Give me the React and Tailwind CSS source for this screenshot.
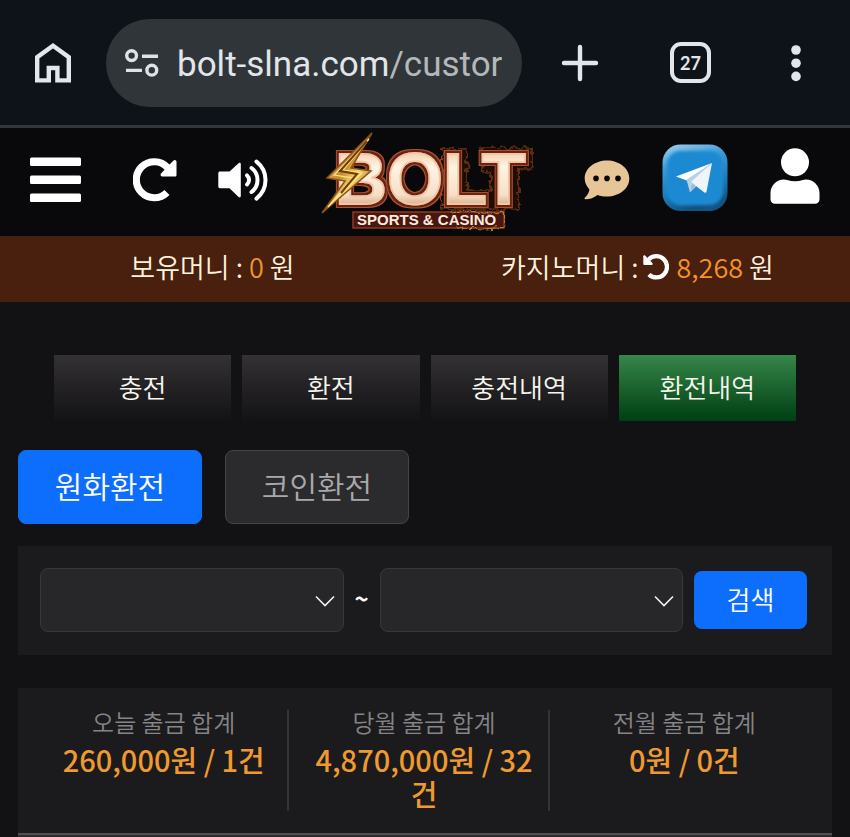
import React, { useState } from 'react';

const HomeIcon = () => (
  <svg viewBox="0 0 38 42" className="w-[38px] h-[42px]" fill="none" stroke="#e2e7ec" strokeWidth="4.4">
    <path d="M3.2 38.4V15.2L19 3.8l15.8 11.4v23.2H23.4V26h-8.6v12.4z" />
  </svg>
);

const SiteInfoIcon = () => (
  <svg viewBox="0 0 36 30" className="w-9 h-[30px] shrink-0" fill="none" stroke="#dfe3e7" strokeWidth="3.4">
    <circle cx="7.6" cy="7.6" r="4.9" />
    <path d="M18 8.2h16M2 22.4h16" />
    <circle cx="27.8" cy="22.2" r="4.9" />
  </svg>
);

const RotateIcon = ({ className }) => (
  <svg viewBox="0 0 44 44" className={className} fill="none">
    <path d="M34.500 9.500A18 18 0 1 0 34 34.500" stroke="#fff" strokeWidth="7.200" />
    <path d="M43.500 4v13c0 1-.6 1.600-1.600 1.600H29.500c-2 0-2.500-2-1.300-3.300L40.500 2.600c1.100-1.100 3-.4 3 1.400z" fill="#fff" />
  </svg>
);

const VolumeIcon = () => (
  <svg viewBox="0 0 52 42" className="w-[52px] h-[42px]">
    <path d="M2 12.500h9.500L20.600 4.200c1-.8 2.200-.4 2.200.9v32c0 1.300-1.200 1.700-2.200.9L11.500 29.300H2c-1 0-1.700-.7-1.700-1.700V14.200c0-1 .7-1.700 1.700-1.700z" fill="#fff" />
    <g fill="none" stroke="#fff" strokeWidth="4" strokeLinecap="round">
      <path d="M29 16.400a6 6 0 0 1 0 9" />
      <path d="M33.500 9a15 15 0 0 1 0 24" />
      <path d="M38.500 2.600a23.500 23.500 0 0 1 0 37" />
    </g>
  </svg>
);

const ChatIcon = () => (
  <svg viewBox="0 0 46 40" className="w-[46px] h-10">
    <path d="M23 .6c12.300 0 22.300 7.900 22.300 18s-10 18-22.300 18c-3.400 0-6.600-.6-9.500-1.700-3.300 2.700-7.600 4.300-12.100 4.300-.9 0-1.200-.8-.6-1.400 2.600-2.700 4.400-5.800 4.600-8.400C2.500 26.300.7 22.600.7 18.600c0-10.100 10-18 22.300-18z" fill="#e6c596" />
    <g fill="#0b0806">
      <circle cx="12" cy="18.400" r="2.800" />
      <circle cx="23" cy="18.400" r="2.800" />
      <circle cx="34" cy="18.400" r="2.800" />
    </g>
  </svg>
);

const TelegramIcon = () => (
  <svg viewBox="0 0 66 68" className="w-[66px] h-[68px]">
    <defs>
      <linearGradient id="tgRim" x1="0" y1="0" x2="0.3" y2="1">
        <stop offset="0" stopColor="#a5d2ee" />
        <stop offset="0.35" stopColor="#3c9bd9" />
        <stop offset="0.75" stopColor="#1c79b8" />
        <stop offset="1" stopColor="#125583" />
      </linearGradient>
      <filter id="tgSoft" x="-20%" y="-20%" width="140%" height="140%">
        <feGaussianBlur stdDeviation="1.8" />
      </filter>
    </defs>
    <rect x="0.500" y="0.500" width="65" height="66.500" rx="18" fill="url(#tgRim)" />
    <rect x="5" y="7" width="56" height="54" rx="14" fill="#1f8ad2" filter="url(#tgSoft)" />
    <path d="M50 19L14 32.500l11.500 4.300z" fill="#fff" />
    <path d="M50 19L24.500 35.500l3.400 12.800 2.600-9.500z" fill="#b9d1e5" />
    <path d="M50 19L30 37l-2.100 11.300 6.300-6 8.600 6.400c.8.400 1.500 0 1.700-.9z" fill="#eef5fb" />
    <path d="M27.900 48.300l6.300-6-4.200-3.800z" fill="#9cbdd8" />
  </svg>
);

const UserIcon = () => (
  <svg viewBox="0 0 50 56" className="w-[50px] h-14" fill="#fff">
    <circle cx="25" cy="14.300" r="14" />
    <path d="M14 31.500c1.200 0 2.200.2 3.200.5 5 1.600 10.600 1.600 15.600 0 1-.3 2-.5 3.200-.5 7.500 0 13.500 6 13.500 13.500v6.500c0 2.500-2 4.300-4.500 4.300H5c-2.500 0-4.500-1.800-4.500-4.300V45c0-7.500 6-13.500 13.500-13.500z" />
  </svg>
);

const Logo = () => (
  <svg viewBox="0 0 220 104" className="w-[220px] h-[104px]" role="img" aria-label="BOLT Sports & Casino">
    <defs>
      <linearGradient id="face" x1="0" y1="0" x2="0" y2="1">
        <stop offset="0.1" stopColor="#f0c4a0" />
        <stop offset="0.35" stopColor="#fff3e4" />
        <stop offset="0.7" stopColor="#f6dfc8" />
        <stop offset="0.9" stopColor="#c98e68" />
      </linearGradient>
      <linearGradient id="gold" x1="0" y1="0" x2="1" y2="1">
        <stop offset="0" stopColor="#fbe08a" />
        <stop offset="0.45" stopColor="#c8892b" />
        <stop offset="0.6" stopColor="#f7d269" />
        <stop offset="1" stopColor="#7d4510" />
      </linearGradient>
      <filter id="rim" x="-10%" y="-20%" width="120%" height="140%">
        <feMorphology in="SourceAlpha" operator="dilate" radius="3" result="outer" />
        <feFlood floodColor="#a8502f" />
        <feComposite in2="outer" operator="in" result="rimLight" />
        <feMorphology in="SourceAlpha" operator="dilate" radius="2" result="inner" />
        <feFlood floodColor="#6b2113" />
        <feComposite in2="inner" operator="in" result="rimDark" />
        <feMerge>
          <feMergeNode in="rimLight" />
          <feMergeNode in="rimDark" />
          <feMergeNode in="SourceGraphic" />
        </feMerge>
      </filter>
      <filter id="burn" x="-10%" y="-20%" width="120%" height="140%">
        <feTurbulence type="fractalNoise" baseFrequency="0.18" numOctaves="2" seed="4" />
        <feDisplacementMap in="SourceGraphic" scale="8" />
      </filter>
    </defs>
    <path
      d="M126 19h24v41h24V42h-9V18h50v21h-13v40h-78z"
      fill="#1c0a04"
      stroke="#8a4318"
      strokeWidth="1.200"
      filter="url(#burn)"
    />
    <text
      x="18"
      y="74"
      fontSize="72"
      className="font-['Liberation_Sans'] font-bold"
      fill="url(#face)"
      stroke="#f3c7a2"
      strokeWidth="1.800"
      filter="url(#rim)"
    >
      BOLT
    </text>
    <g transform="translate(3 0)">
      <path d="M52 3L7 48l18 3L2 83l49-42-20-3z" fill="url(#gold)" stroke="#8a5217" strokeWidth="1.500" />
      <path d="M49 9L14 45l19 3L8 77l34-34-19-3z" fill="none" stroke="#ffe48c" strokeWidth="1.200" />
      <path d="M47 11L20 41l17 3-16 19" fill="none" stroke="#6e3d0c" strokeWidth="2" />
    </g>
    <rect x="36" y="82" width="151" height="16" fill="#4a1710" stroke="#8c3a23" strokeWidth="1.500" />
    <path d="M134 82q14-3 26 0t26-1l2 16-20 2-28-1" fill="none" stroke="#e0a23b" strokeWidth="0.800" filter="url(#burn)" />
    <text x="40" y="95" fontSize="15" className="font-['Liberation_Sans'] font-bold" fill="#fdebdc">SPORTS &amp; CASINO</text>
  </svg>
);

const BrowserBar = () => (
  <div className="flex h-[125px] items-center bg-[#0e131a] pl-[34px] pr-12 text-[#e2e5ea]">
    <button type="button" aria-label="Home">
      <HomeIcon />
    </button>
    <div className="ml-[34px] flex h-[88px] min-w-0 flex-1 items-center rounded-full bg-[#2f3538] px-[18px]">
      <SiteInfoIcon />
      <p className="ml-[17px] overflow-hidden whitespace-nowrap pt-1 font-['Roboto',sans-serif] text-[35px] font-normal leading-[44px]">
        bolt-slna.com<span className="text-[#b3b8bc]">/custor</span>
      </p>
    </div>
    <button type="button" aria-label="New tab" className="ml-[39px]">
      <svg viewBox="0 0 38 38" className="size-[38px]" stroke="#e2e5ea" strokeWidth="4.400" strokeLinecap="round">
        <path d="M19 3v32M3 19h32" />
      </svg>
    </button>
    <button
      type="button"
      className="ml-[71px] flex size-[41px] items-center justify-center rounded-[11px] border-4 border-[#e2e5ea] font-['Lato',sans-serif] text-lg font-bold"
    >
      27
    </button>
    <button type="button" aria-label="More" className="ml-[79px]">
      <svg viewBox="0 0 12 38" className="h-[38px] w-3" fill="#e2e5ea">
        <circle cx="6" cy="6" r="4.800" />
        <circle cx="6" cy="19.200" r="4.800" />
        <circle cx="6" cy="32.400" r="4.800" />
      </svg>
    </button>
  </div>
);

const SiteHeader = () => (
  <header className="flex h-[111px] items-center justify-between border-t-[3px] border-[#33363c] bg-[#09080b] px-[30px] pb-1 text-white">
    <div className="flex items-center">
      <button type="button" aria-label="Menu">
        <svg viewBox="0 0 51 46" className="h-[46px] w-[51px]" fill="#fff">
          <rect y="0.500" width="51" height="8.500" rx="1.500" />
          <rect y="18.500" width="51" height="8.500" rx="1.500" />
          <rect y="36.500" width="51" height="8.500" rx="1.500" />
        </svg>
      </button>
      <button type="button" aria-label="Refresh" className="ml-[52px]">
        <RotateIcon className="size-11" />
      </button>
      <button type="button" aria-label="Sound" className="ml-[41px]">
        <VolumeIcon />
      </button>
    </div>
    <a href="#" className="mt-1">
      <Logo />
    </a>
    <div className="flex items-center">
      <button type="button" aria-label="Messages">
        <ChatIcon />
      </button>
      <a href="#" aria-label="Telegram" className="ml-8 mb-1">
        <TelegramIcon />
      </a>
      <button type="button" aria-label="Account" className="ml-[42px] mb-2">
        <UserIcon />
      </button>
    </div>
  </header>
);

const MoneyBar = () => (
  <div className="grid h-[66px] grid-cols-2 items-center bg-[#491f0e] pb-1 text-[27px] text-[#fff3dd]">
    <p className="text-center">
      보유머니 : <span className="text-[#f29427]">0</span> 원
    </p>
    <p className="flex items-center justify-center whitespace-pre">
      카지노머니 :
      <button type="button" aria-label="Reload" className="ml-1 mr-2">
        <RotateIcon className="size-[26px] -scale-x-100" />
      </button>
      <span className="text-[#f29427]">8,268</span> 원
    </p>
  </div>
);

const DateSelect = ({ label }) => (
  <div className="relative min-w-0 flex-1">
    <select
      aria-label={label}
      className="block h-16 w-full appearance-none rounded-lg border border-[#38373a] bg-[#272629] px-4"
    >
      <option value=""></option>
    </select>
    <svg
      viewBox="0 0 20 12"
      className="pointer-events-none absolute right-[9px] top-[27px] h-3 w-5"
      fill="none"
      stroke="#f1f1f1"
      strokeWidth="1.600"
    >
      <path d="M1 1.500l9 9 9-9" />
    </svg>
  </div>
);

const tabs = ['충전', '환전', '충전내역', '환전내역'];

const totals = [
  { label: '오늘 출금 합계', value: '260,000원 / 1건' },
  { label: '당월 출금 합계', value: '4,870,000원 / 32건' },
  { label: '전월 출금 합계', value: '0원 / 0건' },
];

const App = () => {
  const [activeTab, setActiveTab] = useState('환전내역');
  const [type, setType] = useState('원화환전');

  return (
    <div className="min-h-screen bg-[#121113] font-['Noto_Sans_CJK_KR',sans-serif] font-[350]">
      <BrowserBar />
      <SiteHeader />
      <MoneyBar />

      <nav className="mt-[53px] grid grid-cols-4 gap-[11px] px-[54px]">
        {tabs.map((tab) => (
          <button
            key={tab}
            type="button"
            onClick={() => setActiveTab(tab)}
            className={`h-[66px] bg-linear-to-b pb-1 text-[26px] text-[#f6f6ee] ${
              activeTab === tab ? 'from-[#35874a] to-[#003f12]' : 'from-[#333134] to-[#131214]'
            }`}
          >
            {tab}
          </button>
        ))}
      </nav>

      <main className="px-[18px]">
        <div className="mt-[29px] flex gap-[23px]">
          {['원화환전', '코인환전'].map((item) => (
            <button
              key={item}
              type="button"
              onClick={() => setType(item)}
              className={`h-[74px] w-[184px] rounded-lg border pb-1 text-[30px] ${
                type === item
                  ? 'border-[#0d6efd] bg-[#0d6efd] text-white'
                  : 'border-[#454447] bg-[#2b2a2d] text-[#a9a8aa]'
              }`}
            >
              {item}
            </button>
          ))}
        </div>

        <form
          onSubmit={(e) => e.preventDefault()}
          className="mt-[22px] flex items-center bg-[#1b1a1c] pt-[22px] pb-[23px] pl-[22px] pr-[25px]"
        >
          <DateSelect label="시작일" />
          <span className="w-9 pb-1 text-center text-2xl font-bold text-white">~</span>
          <DateSelect label="종료일" />
          <button type="submit" className="ml-[11px] h-[58px] w-[113px] rounded-lg bg-[#0d6efd] pb-1 text-[26px] text-white">
            검색
          </button>
        </form>

        <section className="mt-[33px] bg-[#1b1a1c]">
          <dl className="grid grid-cols-3 gap-[11px] p-[22px] text-center">
            {totals.map((item) => (
              <div key={item.label} className="border-r-2 border-[#343336] pb-px last:border-transparent">
                <dt className="text-2xl leading-6 text-[#858487]">{item.label}</dt>
                <dd className="mt-2 px-3 text-[29px] leading-[34px] font-medium text-[#ee9a30]">{item.value}</dd>
              </div>
            ))}
          </dl>
          <div className="h-1 border-t-2 border-[#514f52] bg-[#302d30]" />
        </section>
      </main>
    </div>
  );
};

export default App;
